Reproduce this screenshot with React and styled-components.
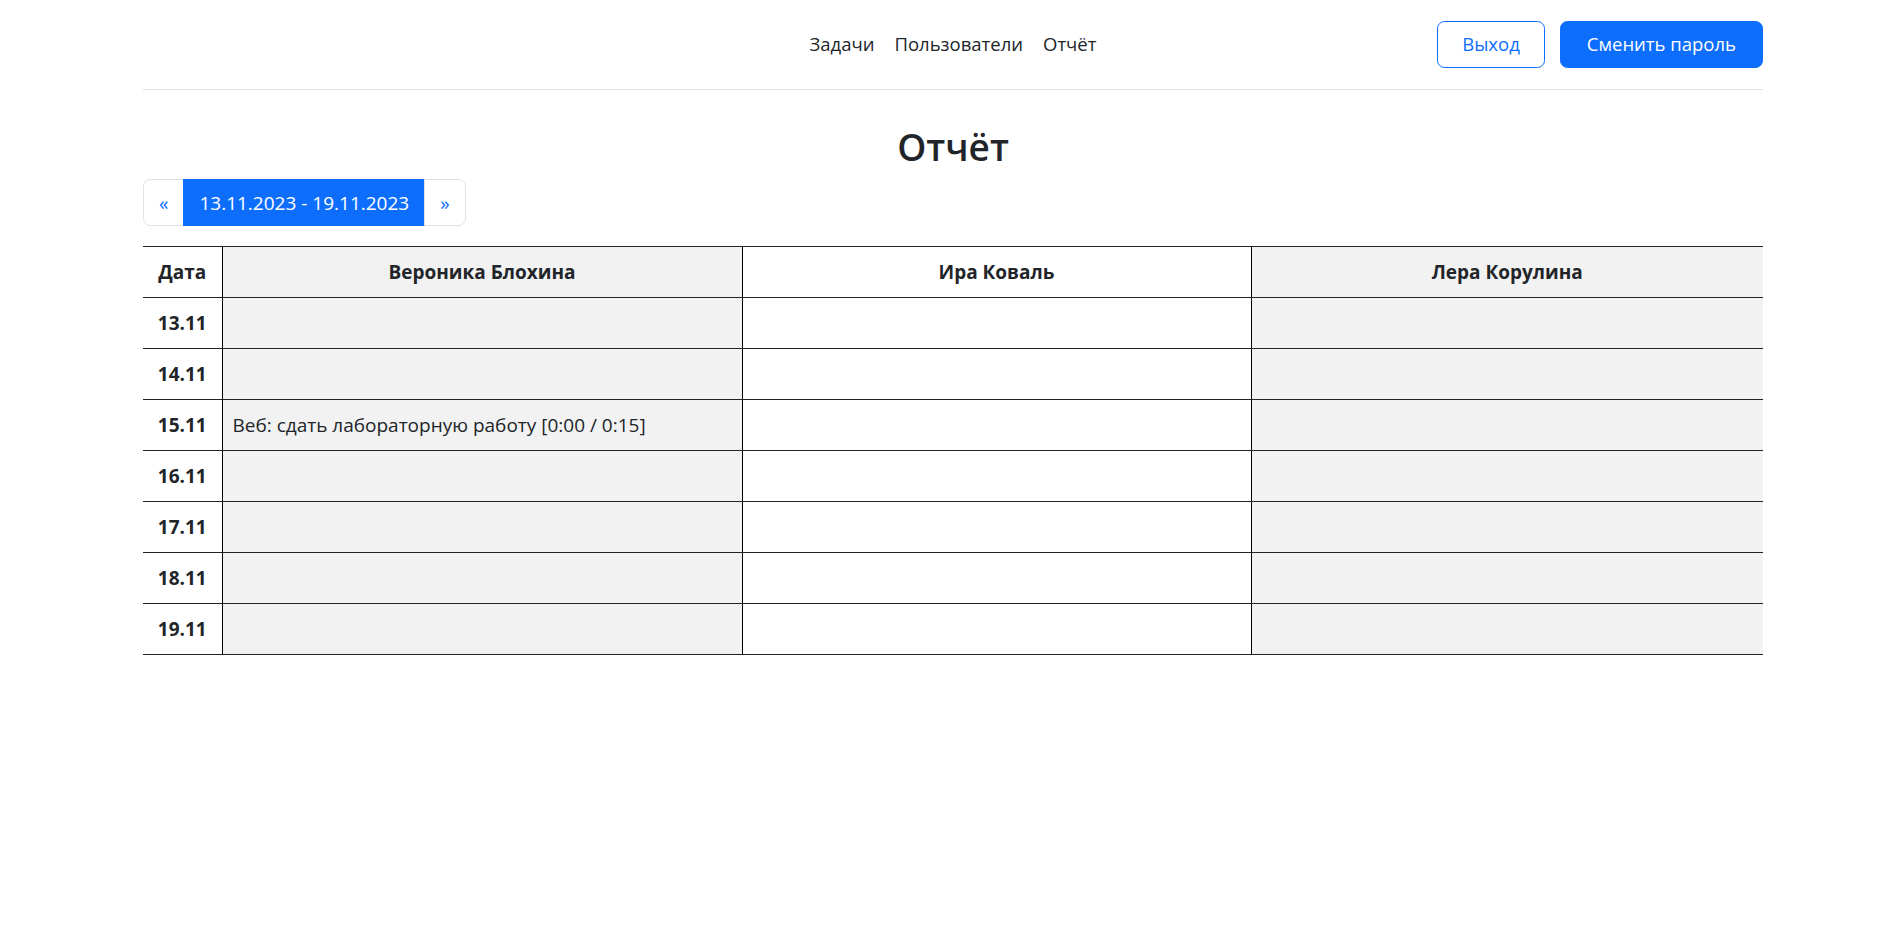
import React from "react";
import styled, { createGlobalStyle } from "styled-components";

const Global = createGlobalStyle`
  * { box-sizing: border-box; }
  html, body { margin: 0; padding: 0; background: #fff; }
  body {
    font-family: "Open Sans", "Noto Sans", "Liberation Sans", sans-serif;
    font-size: 19px;
    line-height: 1.5;
    color: #212529;
  }
`;

const Container = styled.div`
  margin: 0 141px 0 143px;
`;

const Header = styled.header`
  display: grid;
  grid-template-columns: 1fr auto 1fr;
  align-items: center;
  padding: 19px 0 20px;
  border-bottom: 1px solid #dee2e6;
`;

const Nav = styled.nav`
  grid-column: 2;
  display: flex;
  align-items: center;
`;

const NavLink = styled.a`
  padding: 10px 10px;
  color: #212529;
  text-decoration: none;
  font-size: 18.5px;
  line-height: 30px;
  cursor: pointer;
`;

const Actions = styled.div`
  grid-column: 3;
  justify-self: end;
  display: flex;
  gap: 15px;
`;

const Button = styled.button`
  font-family: inherit;
  font-size: 18.5px;
  line-height: 30px;
  padding: 7.5px ${(p) => (p.$solid ? "26px" : "24px")};
  border-radius: 7.5px;
  border: 1px solid #0d6efd;
  background: ${(p) => (p.$solid ? "#0d6efd" : "#fff")};
  color: ${(p) => (p.$solid ? "#fff" : "#0d6efd")};
  cursor: pointer;
`;

const Title = styled.h2`
  margin: 33px 0 8px;
  text-align: center;
  font-size: 37px;
  line-height: 48px;
  font-weight: 600;
`;

const Pager = styled.ul`
  display: inline-flex;
  list-style: none;
  margin: 0 0 20px;
  padding: 0;
`;

const PageLink = styled.li`
  padding: 7.5px 15px;
  line-height: 30px;
  font-size: 19px;
  border: 1px solid ${(p) => (p.$active ? "#0d6efd" : "#dee2e6")};
  background: ${(p) => (p.$active ? "#0d6efd" : "#fff")};
  color: ${(p) => (p.$active ? "#fff" : "#0d6efd")};
  margin-left: -1px;
  cursor: pointer;
  &:first-child {
    margin-left: 0;
    border-radius: 7.5px 0 0 7.5px;
  }
  &:last-child {
    border-radius: 0 7.5px 7.5px 0;
  }
`;

const Table = styled.table`
  width: 100%;
  border-collapse: collapse;
  border-top: 1px solid #212529;
`;

const Cell = styled.td`
  padding: 10px;
  line-height: 30px;
  border-bottom: 1px solid #212529;
  border-left: 1px solid #000;
  background: ${(p) => (p.$shade ? "#f2f2f2" : "#fff")};
  text-align: ${(p) => (p.$center ? "center" : "left")};
  font-weight: ${(p) => (p.$bold ? 700 : 400)};
  &:first-child {
    border-left: none;
  }
`;

const users = ["Вероника Блохина", "Ира Коваль", "Лера Корулина"];
const days = ["13.11", "14.11", "15.11", "16.11", "17.11", "18.11", "19.11"];
const tasks = {
  "15.11": { 0: "Веб: сдать лабораторную работу [0:00 / 0:15]" },
};
const widths = ["79px", "520px", "509px", "auto"];

export default function App() {
  return (
    <>
      <Global />
      <Container>
        <Header>
          <Nav>
            <NavLink>Задачи</NavLink>
            <NavLink>Пользователи</NavLink>
            <NavLink>Отчёт</NavLink>
          </Nav>
          <Actions>
            <Button>Выход</Button>
            <Button $solid>Сменить пароль</Button>
          </Actions>
        </Header>
        <Title>Отчёт</Title>
        <Pager>
          <PageLink>«</PageLink>
          <PageLink $active>13.11.2023 - 19.11.2023</PageLink>
          <PageLink>»</PageLink>
        </Pager>
        <Table>
          <colgroup>
            {widths.map((w, i) => (
              <col key={i} style={{ width: w }} />
            ))}
          </colgroup>
          <thead>
            <tr>
              <Cell as="th" $center $bold>Дата</Cell>
              {users.map((u, i) => (
                <Cell as="th" key={u} $center $bold $shade={i % 2 === 0}>
                  {u}
                </Cell>
              ))}
            </tr>
          </thead>
          <tbody>
            {days.map((d) => (
              <tr key={d}>
                <Cell $center $bold>{d}</Cell>
                {users.map((u, i) => (
                  <Cell key={u} $shade={i % 2 === 0}>
                    {(tasks[d] && tasks[d][i]) || ""}
                  </Cell>
                ))}
              </tr>
            ))}
          </tbody>
        </Table>
      </Container>
    </>
  );
}
